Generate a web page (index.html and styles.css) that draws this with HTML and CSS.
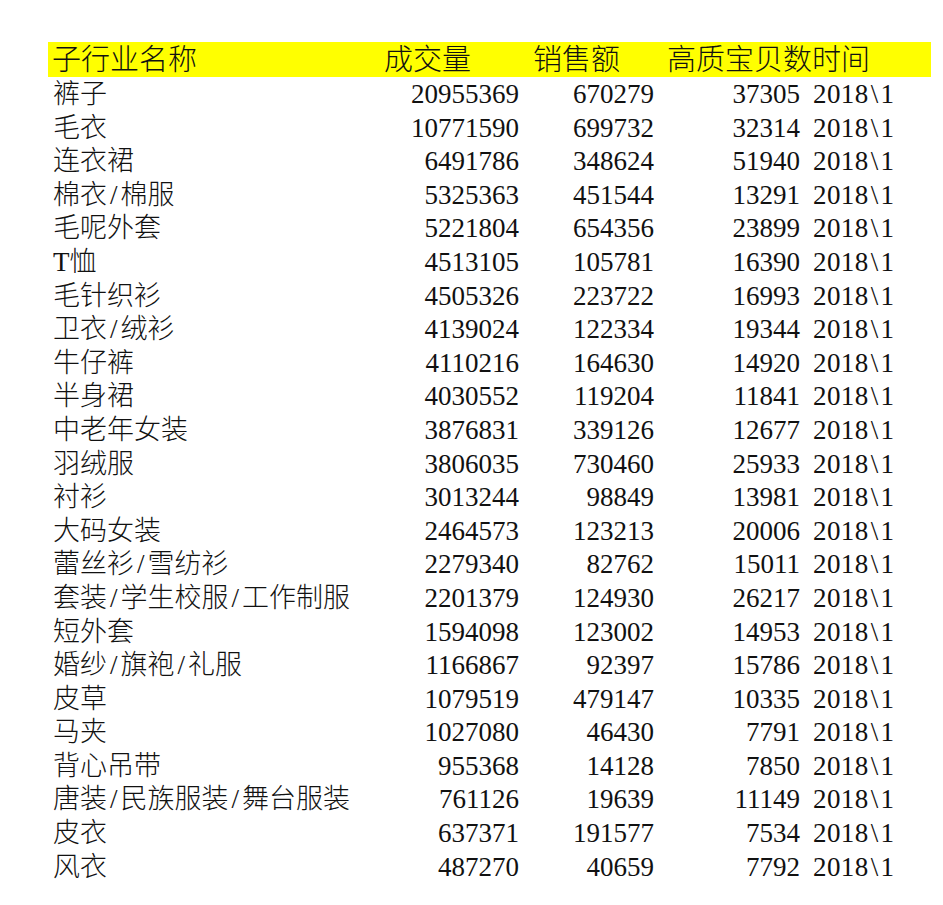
FILE: index.html
```html
<!DOCTYPE html>
<html lang="zh-CN">
<head>
<meta charset="utf-8">
<title>子行业</title>
<link rel="stylesheet" href="styles.css">
</head>
<body>
<table class="sheet">
  <colgroup>
    <col class="c-a"><col class="c-b"><col class="c-c"><col class="c-d"><col class="c-e">
  </colgroup>
  <thead>
    <tr class="head">
      <th class="name">子行业名称</th>
      <th>成交量</th>
      <th class="h-c">销售额</th>
      <th class="h-d">高质宝贝数</th>
      <th class="h-e">时间</th>
    </tr>
  </thead>
  <tbody>
    <tr><td class="name">裤子</td><td>20955369</td><td>670279</td><td>37305</td><td class="t">2018<span class="bs">\</span>1</td></tr>
    <tr><td class="name">毛衣</td><td>10771590</td><td>699732</td><td>32314</td><td class="t">2018<span class="bs">\</span>1</td></tr>
    <tr><td class="name">连衣裙</td><td>6491786</td><td>348624</td><td>51940</td><td class="t">2018<span class="bs">\</span>1</td></tr>
    <tr><td class="name">棉衣<span class="sl">/</span>棉服</td><td>5325363</td><td>451544</td><td>13291</td><td class="t">2018<span class="bs">\</span>1</td></tr>
    <tr><td class="name">毛呢外套</td><td>5221804</td><td>654356</td><td>23899</td><td class="t">2018<span class="bs">\</span>1</td></tr>
    <tr><td class="name">T恤</td><td>4513105</td><td>105781</td><td>16390</td><td class="t">2018<span class="bs">\</span>1</td></tr>
    <tr><td class="name">毛针织衫</td><td>4505326</td><td>223722</td><td>16993</td><td class="t">2018<span class="bs">\</span>1</td></tr>
    <tr><td class="name">卫衣<span class="sl">/</span>绒衫</td><td>4139024</td><td>122334</td><td>19344</td><td class="t">2018<span class="bs">\</span>1</td></tr>
    <tr><td class="name">牛仔裤</td><td>4110216</td><td>164630</td><td>14920</td><td class="t">2018<span class="bs">\</span>1</td></tr>
    <tr><td class="name">半身裙</td><td>4030552</td><td>119204</td><td>11841</td><td class="t">2018<span class="bs">\</span>1</td></tr>
    <tr><td class="name">中老年女装</td><td>3876831</td><td>339126</td><td>12677</td><td class="t">2018<span class="bs">\</span>1</td></tr>
    <tr><td class="name">羽绒服</td><td>3806035</td><td>730460</td><td>25933</td><td class="t">2018<span class="bs">\</span>1</td></tr>
    <tr><td class="name">衬衫</td><td>3013244</td><td>98849</td><td>13981</td><td class="t">2018<span class="bs">\</span>1</td></tr>
    <tr><td class="name">大码女装</td><td>2464573</td><td>123213</td><td>20006</td><td class="t">2018<span class="bs">\</span>1</td></tr>
    <tr><td class="name">蕾丝衫<span class="sl">/</span>雪纺衫</td><td>2279340</td><td>82762</td><td>15011</td><td class="t">2018<span class="bs">\</span>1</td></tr>
    <tr><td class="name">套装<span class="sl">/</span>学生校服<span class="sl">/</span>工作制服</td><td>2201379</td><td>124930</td><td>26217</td><td class="t">2018<span class="bs">\</span>1</td></tr>
    <tr><td class="name">短外套</td><td>1594098</td><td>123002</td><td>14953</td><td class="t">2018<span class="bs">\</span>1</td></tr>
    <tr><td class="name">婚纱<span class="sl">/</span>旗袍<span class="sl">/</span>礼服</td><td>1166867</td><td>92397</td><td>15786</td><td class="t">2018<span class="bs">\</span>1</td></tr>
    <tr><td class="name">皮草</td><td>1079519</td><td>479147</td><td>10335</td><td class="t">2018<span class="bs">\</span>1</td></tr>
    <tr><td class="name">马夹</td><td>1027080</td><td>46430</td><td>7791</td><td class="t">2018<span class="bs">\</span>1</td></tr>
    <tr><td class="name">背心吊带</td><td>955368</td><td>14128</td><td>7850</td><td class="t">2018<span class="bs">\</span>1</td></tr>
    <tr><td class="name">唐装<span class="sl">/</span>民族服装<span class="sl">/</span>舞台服装</td><td>761126</td><td>19639</td><td>11149</td><td class="t">2018<span class="bs">\</span>1</td></tr>
    <tr><td class="name">皮衣</td><td>637371</td><td>191577</td><td>7534</td><td class="t">2018<span class="bs">\</span>1</td></tr>
    <tr><td class="name">风衣</td><td>487270</td><td>40659</td><td>7792</td><td class="t">2018<span class="bs">\</span>1</td></tr>
  </tbody>
</table>
</body>
</html>
```
FILE: styles.css
```css
html, body {
  margin: 0;
  padding: 0;
  background: #ffffff;
}
body {
  padding: 42px 0 0 48px;
  color: #111111;
  font-family: "Liberation Serif", "Noto Sans CJK SC", serif;
  font-weight: 300;
}
.sheet {
  border-collapse: collapse;
  table-layout: fixed;
  width: 883px;
}
.c-a { width: 332px; }
.c-b { width: 145px; }
.c-c { width: 135px; }
.c-d { width: 146px; }
.c-e { width: 125px; }

.sheet th,
.sheet td {
  padding: 0;
  white-space: nowrap;
  overflow: visible;
}
.head {
  background: #ffff00;
  height: 35px;
}
.head th {
  font-size: 29px;
  font-weight: 300;
  text-align: left;
  line-height: 33px;
  padding-top: 2px;
  padding-left: 4px;
  vertical-align: middle;
}
.head .h-c { padding-left: 8px; }
.head .h-d { padding-left: 7px; }
.head .h-e { padding-left: 6px; }

.sheet tbody tr {
  height: 33.6px;
}
.sheet td {
  font-size: 27px;
  line-height: 31.6px;
  padding-top: 2px;
  text-align: right;
  padding-right: 6px;
  vertical-align: middle;
}
.sheet td.name {
  text-align: left;
  padding-left: 5px;
  padding-right: 0;
}
.sheet td.t {
  text-align: left;
  padding-left: 7px;
  padding-right: 0;
  letter-spacing: 0.4px;
}
.sl {
  display: inline-block;
  width: 13.5px;
  text-align: center;
}
.bs {
  display: inline-block;
  width: 12px;
  text-align: center;
}
```
